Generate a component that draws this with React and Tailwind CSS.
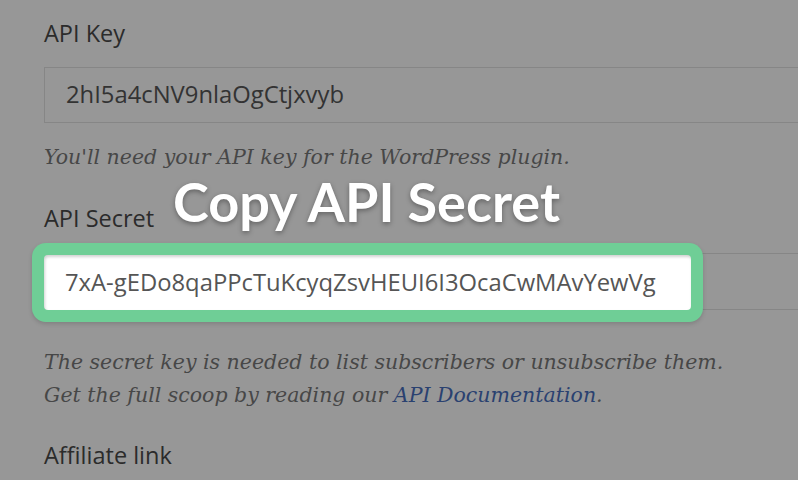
import React from 'react';

const sans = 'font-["Open_Sans","Noto_Sans",sans-serif]';
const serif = 'font-["DejaVu_Serif",Georgia,serif]';

export default function App() {
    return (
        <div className="relative w-[798px] h-[480px] overflow-hidden bg-[#979797]">
            <div className={`pl-[44px] pt-[18px] flex flex-col ${sans}`}>
                {/* API Key */}
                <label className="text-[23.5px] leading-[30px] text-[#2b2b2b]">API Key</label>
                <div className="mt-[19px] h-[56px] w-[800px] border border-[#868686] flex items-center pl-[21px] text-[23.8px] text-[#333]">
                    2hI5a4cNV9nlaOgCtjxvyb
                </div>
                <p className={`mt-[18px] text-[20.5px] italic text-[#474747] leading-[33px] ${serif}`}>
                    You'll need your API key for the WordPress plugin.
                </p>

                {/* API Secret */}
                <label className="mt-[29px] text-[23.5px] leading-[30px] text-[#2b2b2b]">API Secret</label>
                <div className="relative mt-[20px]">
                    <div className="h-[57px] w-[800px] border border-[#868686]" />
                    {/* highlighted copy of the field */}
                    <div className="absolute left-[-12px] top-[-10px] w-[671px] h-[79px] rounded-[14px] bg-[#6fce96] p-[12px] shadow-[0_2px_4px_rgba(0,0,0,0.15)]">
                        <div className="h-full rounded-[4px] bg-white flex items-center pl-[21px] text-[23.8px] text-[#555] shadow-[inset_1px_2px_3px_rgba(0,0,0,0.18)]">
                            7xA-gEDo8qaPPcTuKcyqZsvHEUI6I3OcaCwMAvYewVg
                        </div>
                    </div>
                </div>
                <p className={`mt-[36px] text-[20.5px] italic text-[#474747] leading-[33px] ${serif}`}>
                    The secret key is needed to list subscribers or unsubscribe them.<br />
                    Get the full scoop by reading our <span className="text-[#2a4170]">API Documentation</span>.
                </p>

                {/* Affiliate link */}
                <label className="mt-[28px] text-[23.5px] leading-[30px] text-[#2b2b2b]">Affiliate link</label>
            </div>

            {/* overlay title */}
            <div className="absolute left-[173px] top-[170px] font-['Lato','Noto_Sans',sans-serif] text-[54px] font-bold leading-[64px] text-white [text-shadow:0_2px_5px_rgba(0,0,0,0.35)]">
                Copy API Secret
            </div>
        </div>
    );
}
